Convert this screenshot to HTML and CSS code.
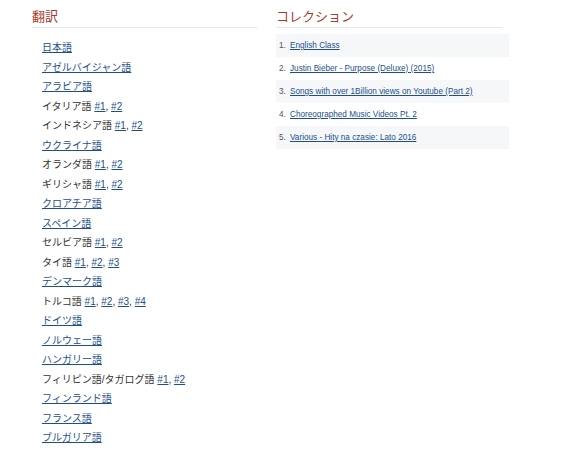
FILE: index.html
```html
<!DOCTYPE html>
<html lang="ja">

<head>
    <meta charset="UTF-8">
    <meta name="viewport" content="width=device-width, initial-scale=1.0">
    <title>翻訳</title>
    <link rel="stylesheet" href="styles.css">
</head>

<body>
    <div class="page">
        <div class="col col-left">
            <h2 class="col-title">翻訳</h2>
            <ul class="trans-list">
                <li><a href="javascript:;">日本語</a></li>
                <li><a href="javascript:;">アゼルバイジャン語</a></li>
                <li><a href="javascript:;">アラビア語</a></li>
                <li>イタリア語 <a href="javascript:;">#1</a>, <a href="javascript:;">#2</a></li>
                <li>インドネシア語 <a href="javascript:;">#1</a>, <a href="javascript:;">#2</a></li>
                <li><a href="javascript:;">ウクライナ語</a></li>
                <li>オランダ語 <a href="javascript:;">#1</a>, <a href="javascript:;">#2</a></li>
                <li>ギリシャ語 <a href="javascript:;">#1</a>, <a href="javascript:;">#2</a></li>
                <li><a href="javascript:;">クロアチア語</a></li>
                <li><a href="javascript:;">スペイン語</a></li>
                <li>セルビア語 <a href="javascript:;">#1</a>, <a href="javascript:;">#2</a></li>
                <li>タイ語 <a href="javascript:;">#1</a>, <a href="javascript:;">#2</a>, <a href="javascript:;">#3</a></li>
                <li><a href="javascript:;">デンマーク語</a></li>
                <li>トルコ語 <a href="javascript:;">#1</a>, <a href="javascript:;">#2</a>, <a href="javascript:;">#3</a>, <a href="javascript:;">#4</a></li>
                <li><a href="javascript:;">ドイツ語</a></li>
                <li><a href="javascript:;">ノルウェー語</a></li>
                <li><a href="javascript:;">ハンガリー語</a></li>
                <li>フィリピン語/タガログ語 <a href="javascript:;">#1</a>, <a href="javascript:;">#2</a></li>
                <li><a href="javascript:;">フィンランド語</a></li>
                <li><a href="javascript:;">フランス語</a></li>
                <li><a href="javascript:;">ブルガリア語</a></li>
            </ul>
        </div>
        <div class="col col-right">
            <h2 class="col-title">コレクション</h2>
            <ol class="coll-list">
                <li><span class="num">1.</span><a href="javascript:;">English Class</a></li>
                <li><span class="num">2.</span><a href="javascript:;">Justin Bieber - Purpose (Deluxe) (2015)</a></li>
                <li><span class="num">3.</span><a href="javascript:;">Songs with over 1Billion views on Youtube (Part 2)</a></li>
                <li><span class="num">4.</span><a href="javascript:;">Choreographed Music Videos Pt. 2</a></li>
                <li><span class="num">5.</span><a href="javascript:;">Various - Hity na czasie: Lato 2016</a></li>
            </ol>
        </div>
    </div>
</body>

</html>
```

FILE: styles.css
```css
ul,
ol,
li,
div,
h2,
a {
    padding: 0px;
    margin: 0px;
}

body {
    margin: 0px;
    background: #fff;
    font-family: "Liberation Sans", Arial, "Noto Sans CJK JP", sans-serif;
    color: #333;
}

a {
    color: #1d4f8c;
    text-decoration: underline;
}

.page {
    display: flex;
    gap: 19px;
    padding: 7px 0px 0px 32px;
}

.col-left {
    width: 225px;
}

.col-right {
    width: 233px;
}

/* 标题：红色 + 下方细灰线 */
.col-title {
    font-size: 13px;
    font-weight: normal;
    color: #a93a2a;
    line-height: 19px;
    padding-bottom: 1px;
    border-bottom: 1px solid #e6e6e6;
}

.col-right .col-title {
    margin-right: 7px;
}

.trans-list {
    list-style: none;
    padding: 10px 0px 0px 10px;
}

.trans-list li {
    font-size: 10px;
    line-height: 19.5px;
}

.coll-list {
    list-style: none;
    margin-top: 6px;
}

.coll-list li {
    height: 23px;
    line-height: 23px;
    font-size: 8.2px;
    padding-left: 3px;
}

/* 隔行浅灰底色 */
.coll-list li:nth-child(odd) {
    background: #f5f7f9;
}

.coll-list .num {
    display: inline-block;
    width: 11px;
    color: #555;
}
```
